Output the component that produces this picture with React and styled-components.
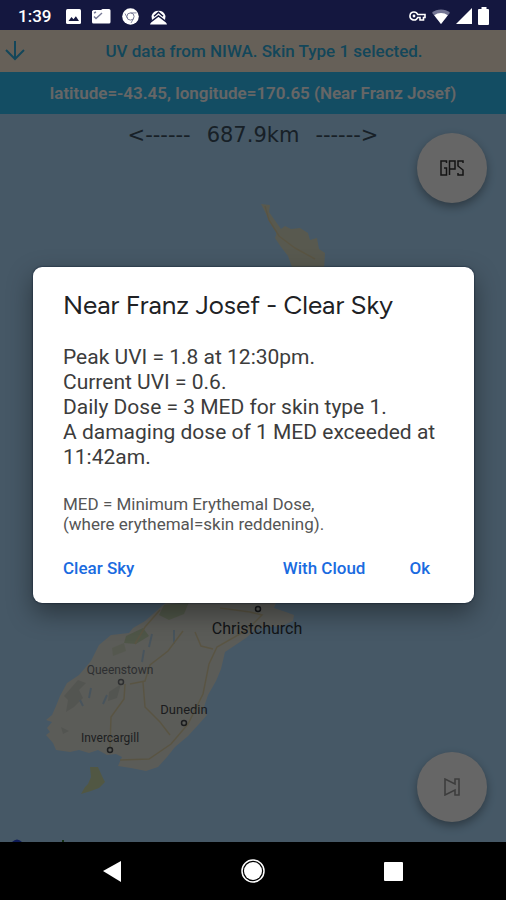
import React from "react";
import styled, { createGlobalStyle } from "styled-components";

const GlobalStyle = createGlobalStyle`
  * { box-sizing: border-box; }
  body { margin: 0; background: #000; font-family: Roboto, "Liberation Sans", sans-serif; }
  button { font: inherit; border: 0; padding: 0; background: none; cursor: pointer; }
`;

const Screen = styled.div`
  display: flex;
  flex-direction: column;
  min-height: 100vh;
`;

const StatusBar = styled.header`
  display: flex;
  align-items: center;
  justify-content: space-between;
  height: 30px;
  padding: 2px 16px 0 18px;
  background: #14173f;
  color: #fff;
`;

const StatusGroup = styled.div`
  display: flex;
  align-items: center;
  gap: ${(p) => p.$gap}px;
`;

const Clock = styled.time`
  margin-right: 4px;
  font-size: 17px;
  line-height: 28px;
  font-weight: 500;
`;

const Stage = styled.main`
  position: relative;
  flex: 1;
  display: flex;
  flex-direction: column;
`;

const Banner = styled.div`
  display: flex;
  align-items: center;
  height: 42px;
  padding: 0 4px;
  background: ${(p) => p.$background};
  color: ${(p) => p.$color};
  font-size: 17px;
  font-weight: ${(p) => p.$weight};
`;

const BannerText = styled.p`
  flex: 1;
  margin: 0;
  text-align: center;
  white-space: nowrap;
`;

const BannerButton = styled.button`
  display: flex;
  color: inherit;
`;

const MapArea = styled.section`
  position: relative;
  flex: 1;
  display: flex;
  flex-direction: column;
  align-items: flex-end;
  justify-content: space-between;
  padding: 19px 19px 20px;
  background: #aedcff;
`;

const MapCanvas = styled.svg`
  position: absolute;
  inset: 0;
  width: 100%;
  height: 100%;
`;

const ScaleLabel = styled.div`
  position: absolute;
  top: 9px;
  left: 0;
  right: 0;
  display: flex;
  align-items: center;
  justify-content: center;
  gap: 16px;
  font-family: "DejaVu Sans", sans-serif;
  font-size: 21px;
  line-height: 24px;
  color: #3c5262;
`;

const Fab = styled.button`
  position: relative;
  display: flex;
  align-items: center;
  justify-content: center;
  width: 70px;
  height: 70px;
  border-radius: 50%;
  background: #fff;
  box-shadow: 0 4px 10px rgba(0, 0, 0, 0.35);
`;

const Scrim = styled.div`
  position: absolute;
  inset: 0;
  display: flex;
  align-items: center;
  justify-content: center;
  padding: 0 32px 2px 33px;
  background: rgba(0, 0, 0, 0.6);
`;

const Dialog = styled.section`
  width: 100%;
  max-width: 560px;
  padding: 22px 30px 17px;
  border-radius: 9px;
  background: #fff;
  box-shadow: 0 10px 26px rgba(0, 0, 0, 0.4), 0 0 2px #04142c;
`;

const Title = styled.h1`
  margin: 0 0 24px;
  font-family: Figtree, Lato, sans-serif;
  font-size: 26px;
  line-height: 32px;
  font-weight: 400;
  color: #202124;
`;

const Report = styled.p`
  margin: 0 0 24px;
  font-size: 21px;
  line-height: 25px;
  font-weight: 400;
  color: #3c3c3c;
`;

const Note = styled.p`
  margin: 0 0 16px;
  font-size: 17px;
  line-height: 20px;
  font-weight: 400;
  color: #555;
`;

const Actions = styled.div`
  display: flex;
  gap: 44px;
  padding-right: 14px;
`;

const Action = styled.button`
  height: 36px;
  margin-right: ${(p) => (p.$start ? "auto" : "0")};
  font-size: 17px;
  font-weight: 500;
  color: #1a6be0;
`;

const NavBar = styled.nav`
  display: flex;
  align-items: center;
  justify-content: center;
  gap: 112px;
  height: 58px;
  background: #000;
`;

const NavButton = styled.button`
  display: flex;
`;

function NotificationIcons() {
  return (
    <>
      <svg width="15" height="15" viewBox="0 0 15 15" aria-hidden="true">
        <rect width="15" height="15" rx="1.5" fill="#fff" />
        <path d="M2.5 12 5.5 8l2 2.2 2.4-3L13 12z" fill="#14173f" />
      </svg>
      <svg width="19" height="15" viewBox="0 0 19 15" aria-hidden="true">
        <path d="M1.5 1H9l1.5-1H17a1.5 1.5 0 0 1 1.500 1.500V13a1.500 1.500 0 0 1-1.500 1.500H1.500A1.500 1.500 0 0 1 0 13V2z" fill="#fff" />
        <path d="M2 7.500 4 9.500 10 4M2 4l2-1" stroke="#777a96" strokeWidth="1.400" fill="none" />
      </svg>
      <svg width="17" height="17" viewBox="0 0 17 17" aria-hidden="true">
        <circle cx="8.500" cy="8.500" r="8.300" fill="#fff" />
        <circle cx="8.500" cy="8.500" r="3.600" fill="none" stroke="#777a96" strokeWidth="1" />
        <path d="M8.500 4.900h6M5.400 10.300 3 5.500M11.600 10.300 9 15" stroke="#777a96" strokeWidth="0.900" />
      </svg>
      <svg width="17" height="17" viewBox="0 0 17 17" aria-hidden="true">
        <path d="M1.500 8A7.300 7.300 0 0 1 15.500 8L15 12l2 4.500H0L2 12z" fill="#fff" />
        <path d="m4 8.300 4.500-4 4.500 4" fill="none" stroke="#14173f" strokeWidth="1.500" />
        <path d="m0 14.500 8.500-6.500L17 14.500" fill="none" stroke="#14173f" strokeWidth="1.500" />
      </svg>
    </>
  );
}

function SystemIcons() {
  return (
    <>
      <svg width="17" height="10" viewBox="0 0 17 10" aria-hidden="true">
        <path d="M5 1a4 4 0 1 0 3.700 5.500H11V9h3.500V6.500H16v-3H8.700A4 4 0 0 0 5 1z" fill="none" stroke="#fff" strokeWidth="1.600" />
        <circle cx="5" cy="5" r="1.400" fill="#fff" />
      </svg>
      <svg width="18" height="15" viewBox="0 0 18 15" aria-hidden="true">
        <path d="M0 3.800a14 14 0 0 1 18 0L9 15z" fill="#737594" />
        <path d="M2.200 6.300a11 11 0 0 1 13.600 0L9 15z" fill="#fff" />
      </svg>
      <svg width="16" height="16" viewBox="0 0 16 16" aria-hidden="true">
        <path d="M16 0v16H0z" fill="#fff" />
      </svg>
      <svg width="12" height="18" viewBox="0 0 12 18" aria-hidden="true">
        <path d="M3.500 0h5v2H10a1 1 0 0 1 1 1v14a1 1 0 0 1-1 1H1a1 1 0 0 1-1-1V3a1 1 0 0 1 1-1h2.500z" fill="#fff" />
      </svg>
    </>
  );
}

const towns = [
  { name: "Christchurch", x: 257, y: 634, size: 16, color: "#30363c", dotX: 258, dotY: 609 },
  { name: "Queenstown", x: 120, y: 674, size: 12, color: "#73777b", dotX: 121, dotY: 682 },
  { name: "Dunedin", x: 184, y: 714, size: 13, color: "#44484c", dotX: 184, dotY: 723 },
  { name: "Invercargill", x: 110, y: 742, size: 12, color: "#4c5054", dotX: 110, dotY: 750 },
];

function IslandMap() {
  return (
    <MapCanvas viewBox="0 114 506 728" preserveAspectRatio="xMidYMid slice" role="img" aria-label="Map of New Zealand">
      <g fill="#e4e5db">
        <path d="M261 204L270 205 269 212 276 222 281 229 285 226 291 229 300 228 308 233 310 240 317 238 319 249 325 253 324 270H293L288 256 281 247 275 238 277 232 270 222 265 212z" fill="#dcdfc6" />
        <path d="M180 590l-18 16-17 15-12 7-4 5-18 2-12 10-8 16-12 14-12 8-7 13-4 10-4 9-6 5 6 2-5 6 3 4-4 3 7 8 3 7 14 2 9-2 10 3 9-3 9 5 9-1 6 3-4 9 13 2 15 3 12-4 9-10 8-10 13-11 11-12 8-9-4-5 5-15 8-14 5-12 4-17 9-6 12-8 9-8 12-3 15-1 11-5 1-6-8-3-12-4 10-25z" />
        <path d="M90 767l8 0 4 9 3 6-6 6-8 3-10 3 4-7 3-3 3-7z" fill="#cbd9a9" />
      </g>
      <g fill="#b7d09e" opacity="0.65">
        <path d="M164 605l25-3-5 12-15 6-10-5z" />
        <path d="M126 636l17-8 6 8-13 8-12-1z" />
        <path d="M112 648l12-5 2 8-13 5z" opacity="0.5" />
      </g>
      <path d="M78 680l8 3-7 7 4 8-9 9-8 5 2-12-4-4zM109 692l12-8-4 14-9 3zM61 727l8 4-6 3z" fill="#d0d4cb" />
      <g fill="none" stroke="#b5d1e6" strokeWidth="2">
        <path d="M174 630v14M144 650l-2 12M91 688l-2 10M152 634l-3 13M80 700l3 6M107 695l-4 9" />
      </g>
      <g fill="none" stroke="#dfd3a8" strokeWidth="1.500">
        <path d="M265 206l4 14 10 16 16 12 20 11M160 610l-15 17-10 17M220 608l30 4 12 3-15 15-30 17-8 17-6 30-15 30-17 20-22 15-29 1M125 684l-1 15-13 18-1 30M130 684l15-3 5-16 18-14 15-20M143 682l2 25 15 15 10 13M195 632l6 14 12 3" />
      </g>
      {towns.map((t) => (
        <g key={t.name}>
          <circle cx={t.dotX} cy={t.dotY} r="2.500" fill="none" stroke={t.color} strokeWidth="1.500" />
          <text x={t.x} y={t.y} fontSize={t.size} fill={t.color} textAnchor="middle" fontFamily="Roboto, sans-serif">
            {t.name}
          </text>
        </g>
      ))}
      <path d="M12 842q5-5 10 0z" fill="#2444dc" />
      <path d="M62 840h2v2h-2z" fill="#33752b" />
    </MapCanvas>
  );
}

export default function App() {
  return (
    <Screen>
      <GlobalStyle />
      <StatusBar>
        <StatusGroup $gap={11}>
          <Clock>1:39</Clock>
          <NotificationIcons />
        </StatusGroup>
        <StatusGroup $gap={6}>
          <SystemIcons />
        </StatusGroup>
      </StatusBar>

      <Stage>
        <Banner $background="#fff0dc" $color="#30b0e0" $weight={500}>
          <BannerButton aria-label="Download">
            <svg width="22" height="22" viewBox="0 0 22 22" fill="none" stroke="currentColor" strokeWidth="2" aria-hidden="true">
              <path d="M11 1v18M2 10l9 9 9-9" />
            </svg>
          </BannerButton>
          <BannerText>UV data from NIWA. Skin Type 1 selected.</BannerText>
        </Banner>
        <Banner $background="#30c0f8" $color="#fff" $weight={600}>
          <BannerText>latitude=-43.45, longitude=170.65 (Near Franz Josef)</BannerText>
        </Banner>

        <MapArea>
          <IslandMap />
          <ScaleLabel>
            <span>&lt;------</span>
            <span>687.9km</span>
            <span>------&gt;</span>
          </ScaleLabel>
          <Fab aria-label="GPS">
            <svg width="24" height="16" viewBox="0 0 24 16" fill="none" stroke="#333" strokeWidth="1.500" aria-hidden="true">
              <path d="M6.500 3V1H1v14h5.500V8H4M9.500 15V1H15v8H9.500M23 3V1h-5v5l5 4v5h-5v-2" />
            </svg>
          </Fab>
          <Fab aria-label="Next">
            <svg width="16" height="18" viewBox="0 0 16 18" fill="none" stroke="#999" strokeWidth="1.600" aria-hidden="true">
              <path d="M1 1v16l10-5v5h4V1h-4v5z" />
            </svg>
          </Fab>
        </MapArea>

        <Scrim>
          <Dialog role="dialog" aria-labelledby="report-title">
            <Title id="report-title">Near Franz Josef - Clear Sky</Title>
            <Report>
              Peak UVI = 1.8 at 12:30pm.
              <br />
              Current UVI = 0.6.
              <br />
              Daily Dose = 3 MED for skin type 1.
              <br />
              A damaging dose of 1 MED exceeded at 11:42am.
            </Report>
            <Note>
              MED = Minimum Erythemal Dose,
              <br />
              (where erythemal=skin reddening).
            </Note>
            <Actions>
              <Action $start>Clear Sky</Action>
              <Action>With Cloud</Action>
              <Action>Ok</Action>
            </Actions>
          </Dialog>
        </Scrim>
      </Stage>

      <NavBar>
        <NavButton aria-label="Back">
          <svg width="28" height="28" viewBox="0 0 28 28" aria-hidden="true">
            <path d="M4 14 22 4v21z" fill="#fff" />
          </svg>
        </NavButton>
        <NavButton aria-label="Home">
          <svg width="28" height="28" viewBox="0 0 28 28" aria-hidden="true">
            <circle cx="14" cy="14" r="11" fill="none" stroke="#fff" strokeWidth="1.500" />
            <circle cx="14" cy="14" r="9" fill="#fff" />
          </svg>
        </NavButton>
        <NavButton aria-label="Recent apps">
          <svg width="28" height="28" viewBox="0 0 28 28" aria-hidden="true">
            <rect x="5" y="5" width="19" height="19" rx="1" fill="#fff" />
          </svg>
        </NavButton>
      </NavBar>
    </Screen>
  );
}
